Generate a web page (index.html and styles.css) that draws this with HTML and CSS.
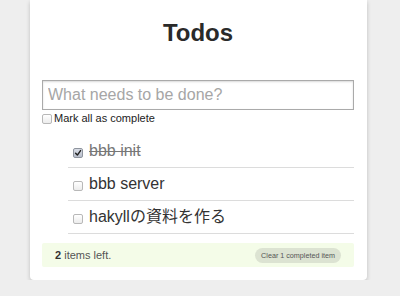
FILE: index.html
```html
<!DOCTYPE html>
<html>
<head>
<meta charset="utf-8">
<link rel="stylesheet" href="styles.css">
</head>
<body>
<div class="app">
  <h1 class="title">Todos</h1>
  <input class="new-todo" type="text" placeholder="What needs to be done?">
  <label class="mark-all"><span class="box small"></span>Mark all as complete</label>
  <ul class="list">
    <li class="item done"><span class="box checked"><svg viewBox="0 0 10 10" width="8" height="8"><path d="M2 5.2 L4.2 7.6 L8.2 2" fill="none" stroke="#222" stroke-width="1.8" stroke-linecap="round" stroke-linejoin="round"/></svg></span><span class="label">bbb init</span></li>
    <li class="item"><span class="box"></span><span class="label">bbb server</span></li>
    <li class="item"><span class="box"></span><span class="label">hakyllの資料を作る</span></li>
  </ul>
  <div class="footer">
    <span class="count"><b>2</b> items left.</span>
    <span class="clear">Clear 1 completed item</span>
  </div>
</div>
</body>
</html>
```
FILE: styles.css
```css
html, body {
  margin: 0;
  padding: 0;
}
body {
  background: #eeeeee;
  color: #333;
  font-family: "Liberation Sans", Arial, "Noto Sans CJK JP", sans-serif;
}
.app {
  width: 337px;
  box-sizing: border-box;
  margin-left: 30px;
  background: #fff;
  padding: 0 13px 13px 12px;
  border-radius: 0 0 4px 4px;
  box-shadow: rgba(0,0,0,0.2) 0 2px 4px 0;
}
.title {
  margin: 0;
  padding: 21px 0 35px;
  font-size: 24px;
  line-height: 24px;
  font-weight: bold;
  text-align: center;
  color: #2a2a2a;
}
.new-todo {
  display: block;
  width: 312px;
  height: 30px;
  box-sizing: border-box;
  margin: 0;
  padding: 0 5px;
  border: 1px solid #aaa;
  box-shadow: rgba(0,0,0,0.15) 0 1px 2px 0 inset;
  font-family: inherit;
  font-size: 16px;
  color: #333;
  outline: none;
}
.new-todo::placeholder {
  color: #a6a6a6;
}
.mark-all {
  display: flex;
  align-items: center;
  gap: 2px;
  margin-top: 3px;
  height: 11px;
  font-size: 11px;
  line-height: 11px;
  color: #222;
}
.box {
  display: inline-flex;
  align-items: center;
  justify-content: center;
  flex: none;
  width: 8px;
  height: 8px;
  border: 1px solid #b8b8b8;
  border-radius: 2px;
  background: linear-gradient(#ffffff, #ececec);
  box-sizing: content-box;
}
.box.checked {
  background: linear-gradient(#d9dde6, #b9bfcc);
  border-color: #8e949e;
}
.box svg {
  display: block;
}
.list {
  list-style: none;
  margin: 11px 0 0 26px;
  padding: 0;
}
.item {
  display: flex;
  align-items: center;
  padding: 6px 0 6px 5px;
  border-bottom: 1px solid #dcdcdc;
  font-size: 16px;
  line-height: 20px;
}
.item .box {
  margin: 3px 6px 0 0;
}
.item.done .label {
  color: #777;
  text-decoration: line-through;
}
.footer {
  display: flex;
  justify-content: space-between;
  align-items: center;
  margin-top: 9px;
  height: 24px;
  padding: 0 13px;
  background: #f4fce8;
  border-radius: 2px;
  font-size: 11px;
  color: #555;
}
.count b {
  color: #333;
}
.clear {
  display: inline-flex;
  align-items: center;
  height: 15px;
  padding: 0 6px;
  border-radius: 8px;
  background: #dce3d2;
  font-size: 7.2px;
  color: #555;
}
```
